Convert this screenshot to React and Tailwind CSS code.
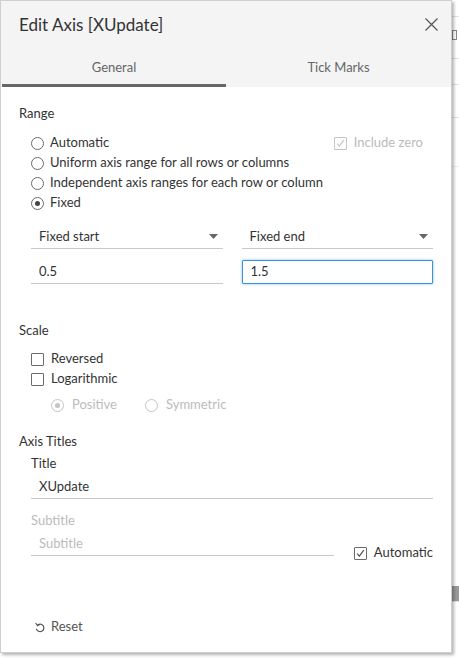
import React from 'react';

const font = { fontFamily: 'Lato, "Open Sans", sans-serif' };

// petit cercle de radio, actiu o no
const Radio = ({ checked = false, disabled = false }) => (
  <span
    className={`w-[13px] h-[13px] rounded-full border flex items-center justify-center shrink-0 ${disabled ? 'border-[#c4c4c4]' : 'border-[#6b6b6b]'}`}
  >
    {checked && (
      <span className={`w-[5px] h-[5px] rounded-full ${disabled ? 'bg-[#c4c4c4]' : 'bg-[#444]'}`} />
    )}
  </span>
);

const Checkbox = ({ checked = false, disabled = false }) => (
  <span
    className={`w-[13px] h-[13px] border rounded-[1px] flex items-center justify-center shrink-0 ${disabled ? 'border-[#c4c4c4]' : 'border-[#6b6b6b]'}`}
  >
    {checked && (
      <svg width="9" height="9" viewBox="0 0 9 9">
        <path d="M1.2 4.6 L3.4 7.2 L7.8 1.2" fill="none" stroke={disabled ? '#c4c4c4' : '#444'} strokeWidth="1.1" />
      </svg>
    )}
  </span>
);

const Caret = () => (
  <svg width="9" height="5" viewBox="0 0 9 5">
    <path d="M0 0 H9 L4.5 5 Z" fill="#666" />
  </svg>
);

const RadioRow = ({ label, checked }) => (
  <div className="h-[20px] flex items-center gap-[6px]">
    <Radio checked={checked} />
    <span>{label}</span>
  </div>
);

export default function App() {
  return (
    <div className="w-[459px] h-[659px] bg-white flex overflow-hidden text-[13px] text-[#333]" style={font}>
      {/* el diàleg */}
      <div className="w-[452px] h-[653px] shrink-0 flex flex-col bg-white border border-[#cfcfcf] shadow-[2px_2px_3px_rgba(0,0,0,0.3)] z-10">
        <div className="bg-[#f4f4f4]">
          <div className="h-[47px] flex items-center justify-between pl-[18px] pr-[13px]">
            <span className="text-[17px] text-[#333]">Edit Axis [XUpdate]</span>
            <svg width="13" height="13" viewBox="0 0 13 13">
              <path d="M0.5 0.5 L12.5 12.5 M12.5 0.5 L0.5 12.5" stroke="#555" strokeWidth="1.2" />
            </svg>
          </div>
          <div className="grid grid-cols-2 text-[#666]">
            <div className="h-[39px] pt-[4px] flex items-center justify-center border-b-[3px] border-[#666] bg-[#f4f4f4] ml-[1px]">General</div>
            <div className="h-[39px] pt-[4px] flex items-center justify-center border-b-[3px] border-transparent">Tick Marks</div>
          </div>
        </div>

        <div className="flex-1 flex flex-col px-[18px] pt-[17px]">
          <div className="h-[20px] flex items-center">Range</div>

          <div className="mt-[9px] pl-3 flex">
            <div className="flex-1 flex flex-col">
              <RadioRow label="Automatic" />
              <RadioRow label="Uniform axis range for all rows or columns" />
              <RadioRow label="Independent axis ranges for each row or column" />
              <RadioRow label="Fixed" checked />
            </div>
            <div className="h-[20px] flex items-center gap-[7px] text-[#bbb] pr-[10px]">
              <Checkbox checked disabled />
              <span>Include zero</span>
            </div>
          </div>

          <div className="mt-[12px] pl-3 grid grid-cols-2 gap-x-[19px]">
            <div className="h-[24px] flex items-center justify-between pl-2 pr-[5px] border-b border-[#c8c8c8]">
              <span>Fixed start</span>
              <Caret />
            </div>
            <div className="h-[24px] flex items-center justify-between pl-2 pr-[5px] border-b border-[#c8c8c8]">
              <span>Fixed end</span>
              <Caret />
            </div>
            <div className="mt-[11px] h-[24px] flex items-center pl-2 border-b border-[#c8c8c8]">0.5</div>
            <div className="mt-[11px] h-[24px] flex items-center pl-2 border border-[#3a93d8] rounded-[1px] shadow-[0_0_3px_rgba(58,147,216,0.6)]">1.5</div>
          </div>

          <div className="mt-[37px] h-[20px] flex items-center">Scale</div>
          <div className="mt-[8px] pl-3 flex flex-col">
            <div className="h-[20px] flex items-center gap-[7px]">
              <Checkbox />
              <span>Reversed</span>
            </div>
            <div className="h-[20px] flex items-center gap-[7px]">
              <Checkbox />
              <span>Logarithmic</span>
            </div>
            <div className="mt-[6px] h-[20px] flex items-center pl-[20px] text-[#bbb]">
              <div className="flex items-center gap-[8px] w-[94px]">
                <Radio checked disabled />
                <span>Positive</span>
              </div>
              <div className="flex items-center gap-[8px]">
                <Radio disabled />
                <span>Symmetric</span>
              </div>
            </div>
          </div>

          <div className="mt-[17px] h-[20px] flex items-center">Axis Titles</div>
          <div className="pl-3 flex flex-col">
            <div className="mt-[2px] h-[20px] flex items-center">Title</div>
            <div className="mt-[2px] h-[23px] flex items-center pl-2 border-b border-[#c8c8c8]">XUpdate</div>
            <div className="mt-[12px] h-[20px] flex items-center text-[#bbb]">Subtitle</div>
            <div className="flex items-end">
              <div className="mt-[2px] w-[303px] h-[23px] flex items-center pl-2 border-b border-[#c8c8c8] text-[#bbb]">Subtitle</div>
              <div className="ml-auto h-[20px] flex items-center gap-[7px] translate-y-[7px]">
                <Checkbox checked />
                <span>Automatic</span>
              </div>
            </div>
          </div>

          <div className="mt-auto mb-[15px] pl-4 h-[20px] flex items-center gap-[6px] text-[#555]">
            <svg width="10" height="11" viewBox="0 0 10 11">
              <path d="M2.2 3.4 A3.8 3.8 0 1 1 1.4 6.8" fill="none" stroke="#555" strokeWidth="1.2" />
              <path d="M0.6 1 L2.6 3.8 L5 2.2" fill="none" stroke="#555" strokeWidth="1.2" />
            </svg>
            <span>Reset</span>
          </div>
        </div>
      </div>

      {/* el que queda darrere del diàleg */}
      <div className="flex-1 flex flex-col bg-white">
        <div className="h-[16px]" />
        <div className="h-[42px] border-t border-[#e2e2e2] flex items-start pt-[13px]">
          <span className="w-[5px] h-[10px] border border-[#888]" />
        </div>
        <div className="h-[26px] border-t border-[#e2e2e2]" />
        <div className="h-[33px] border-t border-[#e2e2e2]" />
        <div className="h-[49px] border-t border-[#e2e2e2]" />
        <div className="h-[420px] border-t border-[#eee]" />
        <div className="h-[15px] bg-[#999]" />
        <div className="flex-1 border-t border-[#e2e2e2]" />
      </div>
    </div>
  );
}
